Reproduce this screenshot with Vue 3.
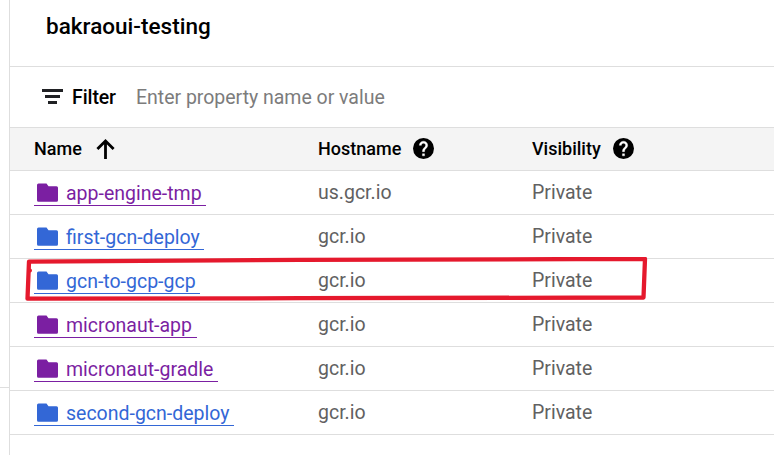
<script setup>
const rows = [
  { name: 'app-engine-tmp', host: 'us.gcr.io', visited: true },
  { name: 'first-gcn-deploy', host: 'gcr.io', visited: false },
  { name: 'gcn-to-gcp-gcp', host: 'gcr.io', visited: false, marked: true },
  { name: 'micronaut-app', host: 'gcr.io', visited: true },
  { name: 'micronaut-gradle', host: 'gcr.io', visited: true },
  { name: 'second-gcn-deploy', host: 'gcr.io', visited: false },
]
</script>

<template>
  <div class="page">
    <aside class="rail"><div class="rail-section"></div></aside>
    <main class="content">
      <header class="title"><h1>bakraoui-testing</h1></header>
      <div class="filter">
        <svg class="filter-icon" width="21" height="15" viewBox="0 0 21 15">
          <path d="M0 0h21v3H0zM3 6h15v3H3zM6 12h9v3H6z" fill="#202124" />
        </svg>
        <span class="filter-label">Filter</span>
        <span class="filter-hint">Enter property name or value</span>
      </div>
      <div class="row head">
        <div class="cell">
          <span class="h-name">Name</span>
          <svg class="arrow" width="19" height="21" viewBox="0 0 19 21">
            <path d="M9.500 21V3M1.400 11L9.500 2.900l8.100 8.100" fill="none" stroke="#000" stroke-width="2.8" />
          </svg>
        </div>
        <div v-for="h in ['Hostname', 'Visibility']" :key="h" class="cell">
          <span :class="'h-' + h.toLowerCase()">{{ h }}</span>
          <svg class="help" width="21" height="21" viewBox="2 2 20 20">
            <circle cx="12" cy="12" r="10" />
            <path d="M15.070 11.250l-.9.920C13.450 12.900 13 13.500 13 15h-2v-.5c0-1.100.450-2.100 1.170-2.830l1.240-1.260c.370-.360.590-.860.590-1.410 0-1.100-.9-2-2-2s-2 .9-2 2H8c0-2.210 1.790-4 4-4s4 1.790 4 4c0 .880-.360 1.680-.930 2.250zM11 17h2v2h-2z" fill="#fff" stroke="#fff" stroke-width=".35" />
          </svg>
        </div>
      </div>
      <div v-for="r in rows" :key="r.name" class="row">
        <div class="cell">
          <a class="link" :class="{ visited: r.visited }">
            <svg width="21" height="19" viewBox="0 0 21 19">
              <path d="M1.500 .4H9.500L11.500 3.200H19.500Q21 3.200 21 4.700V17.200Q21 18.700 19.500 18.700H1.500Q0 18.700 0 17.200V1.900Q0 .4 1.500 .4Z" fill="currentColor" />
            </svg>
            <span>{{ r.name }}</span>
          </a>
        </div>
        <div class="cell value">{{ r.host }}</div>
        <div class="cell value">Private</div>
        <svg v-if="r.marked" class="mark" width="624" height="46" viewBox="0 0 624 46">
          <path d="M4 4.600L275 2.900L620 1.900L618.500 40.500L275 41.200L2.500 41.700Z" fill="none" stroke="#e5192d" stroke-width="4.300" stroke-linejoin="round" />
          <circle cx="5" cy="13.500" r="2" fill="#e5192d" />
        </svg>
      </div>
    </main>
  </div>
</template>

<style>
body { margin: 0; background: #fff; overflow: hidden; }
</style>

<style scoped>
.page { display: flex; width: 774px; height: 455px; overflow: hidden; font-family: Roboto, sans-serif; font-size: 19.5px; color: #000; }
.rail { width: 9px; flex: none; border-right: 1px solid #dedede; }
.rail-section { height: 387px; border-bottom: 1px solid #dedede; }
.content { flex: 1; min-width: 0; }
.title { height: 66px; border-bottom: 1px solid #dedede; padding-left: 36px; }
h1 { margin: 0; font-size: 22.5px; font-weight: 500; line-height: 52px; letter-spacing: 0.02px; }
.filter { display: flex; align-items: center; height: 60px; padding-left: 32px; line-height: 60px; border-bottom: 1px solid #dedede; }
.filter-icon { margin-bottom: 1px; }
.filter-label, .filter-hint { margin-top: 2px; }
.filter-label { margin-left: 9px; width: 64px; font-weight: 500; letter-spacing: -0.1px; }
.filter-hint { color: #7c7c7c; white-space: nowrap; letter-spacing: -0.02px; }
.row { position: relative; display: grid; grid-template-columns: 284px 214px 1fr; height: 43px; padding-left: 24px; border-bottom: 1px solid #dedede; }
.cell { display: flex; align-items: center; min-width: 0; white-space: nowrap; }
.head { height: 40px; padding-bottom: 2px; background: #f4f4f4; font-size: 18px; font-weight: 500; }
.h-name { width: 62px; }
.h-hostname { width: 95px; }
.h-visibility { width: 81px; }
.link { display: flex; align-items: center; align-self: flex-start; height: 27px; margin-top: 7px; padding: 0 4.500px 0 3px; border-bottom: 1px solid currentColor; color: #3367d6; line-height: 27px; }
.link svg { margin: 2px 8px 0 0; }
.link span { margin-top: 4px; }
.link.visited { color: #7b1fa2; }
.value { color: #616161; }
.mark { position: absolute; left: 15px; top: -2px; }
</style>
